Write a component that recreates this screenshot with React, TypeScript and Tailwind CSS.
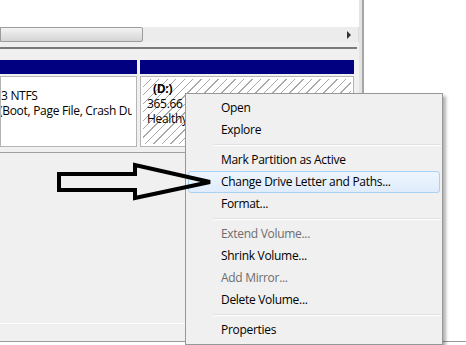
import React from "react";

type Item = { label: string; disabled?: boolean; active?: boolean } | "sep";

const menu: Item[] = [
  { label: "Open" },
  { label: "Explore" },
  "sep",
  { label: "Mark Partition as Active" },
  { label: "Change Drive Letter and Paths...", active: true },
  { label: "Format..." },
  "sep",
  { label: "Extend Volume...", disabled: true },
  { label: "Shrink Volume..." },
  { label: "Add Mirror...", disabled: true },
  { label: "Delete Volume..." },
  "sep",
  { label: "Properties" },
];

function ContextMenu() {
  return (
    <div className="absolute left-[185px] top-[93px] w-[258px] border border-[#979797] bg-[#f0f0f0] py-[3px] shadow-[3px_3px_3px_rgba(0,0,0,0.3)]">
      {menu.map((it, i) =>
        it === "sep" ? (
          <div key={i} className="h-[8px] flex flex-col justify-center pl-[27px] pr-[1px]">
            <div className="h-px bg-[#e0e0e0]" />
            <div className="h-px bg-white" />
          </div>
        ) : (
          <div
            key={i}
            className={
              it.active
                ? "mx-[2px] h-[22px] flex items-center pl-[32px] rounded-[3px] border border-[#a8d2f4] bg-[linear-gradient(#eef5fd,#dfecfb)] text-black"
                : "mx-[2px] h-[22px] flex items-center pl-[33px] " + (it.disabled ? "text-[#6d6d6d]" : "text-black")
            }
          >
            {it.label}
          </div>
        )
      )}
    </div>
  );
}

function Arrow() {
  return (
    <svg className="absolute left-0 top-0" width="466" height="345" viewBox="0 0 466 345">
      <polygon
        points="59,174 135,174 135,165 210,182 135,198 135,190 59,190"
        fill="none"
        stroke="#000"
        strokeWidth="4"
        strokeLinejoin="miter"
      />
    </svg>
  );
}

export default function App() {
  return (
    <div className="relative w-[466px] h-[345px] overflow-hidden bg-white flex flex-col text-[12px] leading-none tracking-[-0.3px] font-['Open_Sans',sans-serif]">
      <div className="flex h-[341px]">
        <div className="w-[359px] flex flex-col bg-[#f0f0f0]">
          <div className="h-[27px] bg-white" />
          {/* horizontal scrollbar */}
          <div className="h-[15px] flex bg-[#ececec]">
            <div className="w-[143px] border border-[#9c9c9c] rounded-r-[2px] bg-[linear-gradient(#f3f3f3,#e4e4e4_50%,#d4d4d4)]" />
            <div className="flex-1 flex items-center justify-end pr-[7px]">
              <div className="w-0 h-0 border-y-[4px] border-y-transparent border-l-[4px] border-l-[#333]" />
            </div>
            <div className="w-px bg-[#dcdcdc]" />
          </div>
          <div className="h-[5px]" />
          <div className="h-[2px] w-[357px] bg-[#7a7a7a]" />
          <div className="h-[11px]" />
          {/* disk row */}
          <div className="h-[89px] flex gap-[3px]">
            <div className="w-[137px] flex flex-col">
              <div className="h-[14px] bg-[#000080]" />
              <div className="h-[2px]" />
              <div className="h-[71px] border border-[#b4b4b4] bg-white pr-[4px]">
                <div className="h-full overflow-hidden whitespace-nowrap">
                  <div className="h-[11px]" />
                  <div className="h-[15px] flex items-center">3 NTFS</div>
                  <div className="h-[15px] flex items-center -ml-[2px]">(Boot, Page File, Crash Dump, Primary Partition)</div>
                </div>
              </div>
            </div>
            <div className="w-[214px] flex flex-col">
              <div className="h-[14px] bg-[#000080]" />
              <div className="h-[2px]" />
              <div className="h-[71px] border border-[#b4b4b4] p-[2px] bg-white">
                <div className="h-full pl-[4px] pt-[3px] whitespace-nowrap bg-[repeating-linear-gradient(135deg,#ffffff_0px,#ffffff_5px,#a9a9a9_5px,#a9a9a9_6px)]">
                  <div className="h-[14px] flex items-center pl-[6px] font-bold">(D:)</div>
                  <div className="h-[15px] flex items-center">365.66 GB NTFS</div>
                  <div className="h-[15px] flex items-center">Healthy (Primary Partition)</div>
                </div>
              </div>
            </div>
          </div>
          {/* lower area */}
          <div className="h-[3px]" />
          <div className="h-px bg-[#a0a0a0]" />
          <div className="flex-1" />
          <div className="h-px bg-white" />
          <div className="h-[17px]" />
        </div>
        <div className="w-[3px] bg-[#e4e4e4]" />
        <div className="w-[2px] bg-[#a6a6a6]" />
        <div className="flex-1 bg-white" />
      </div>
      <div className="h-px bg-[#9a9a9a]" />
      <div className="flex-1 bg-white" />
      <ContextMenu />
      <Arrow />
    </div>
  );
}
